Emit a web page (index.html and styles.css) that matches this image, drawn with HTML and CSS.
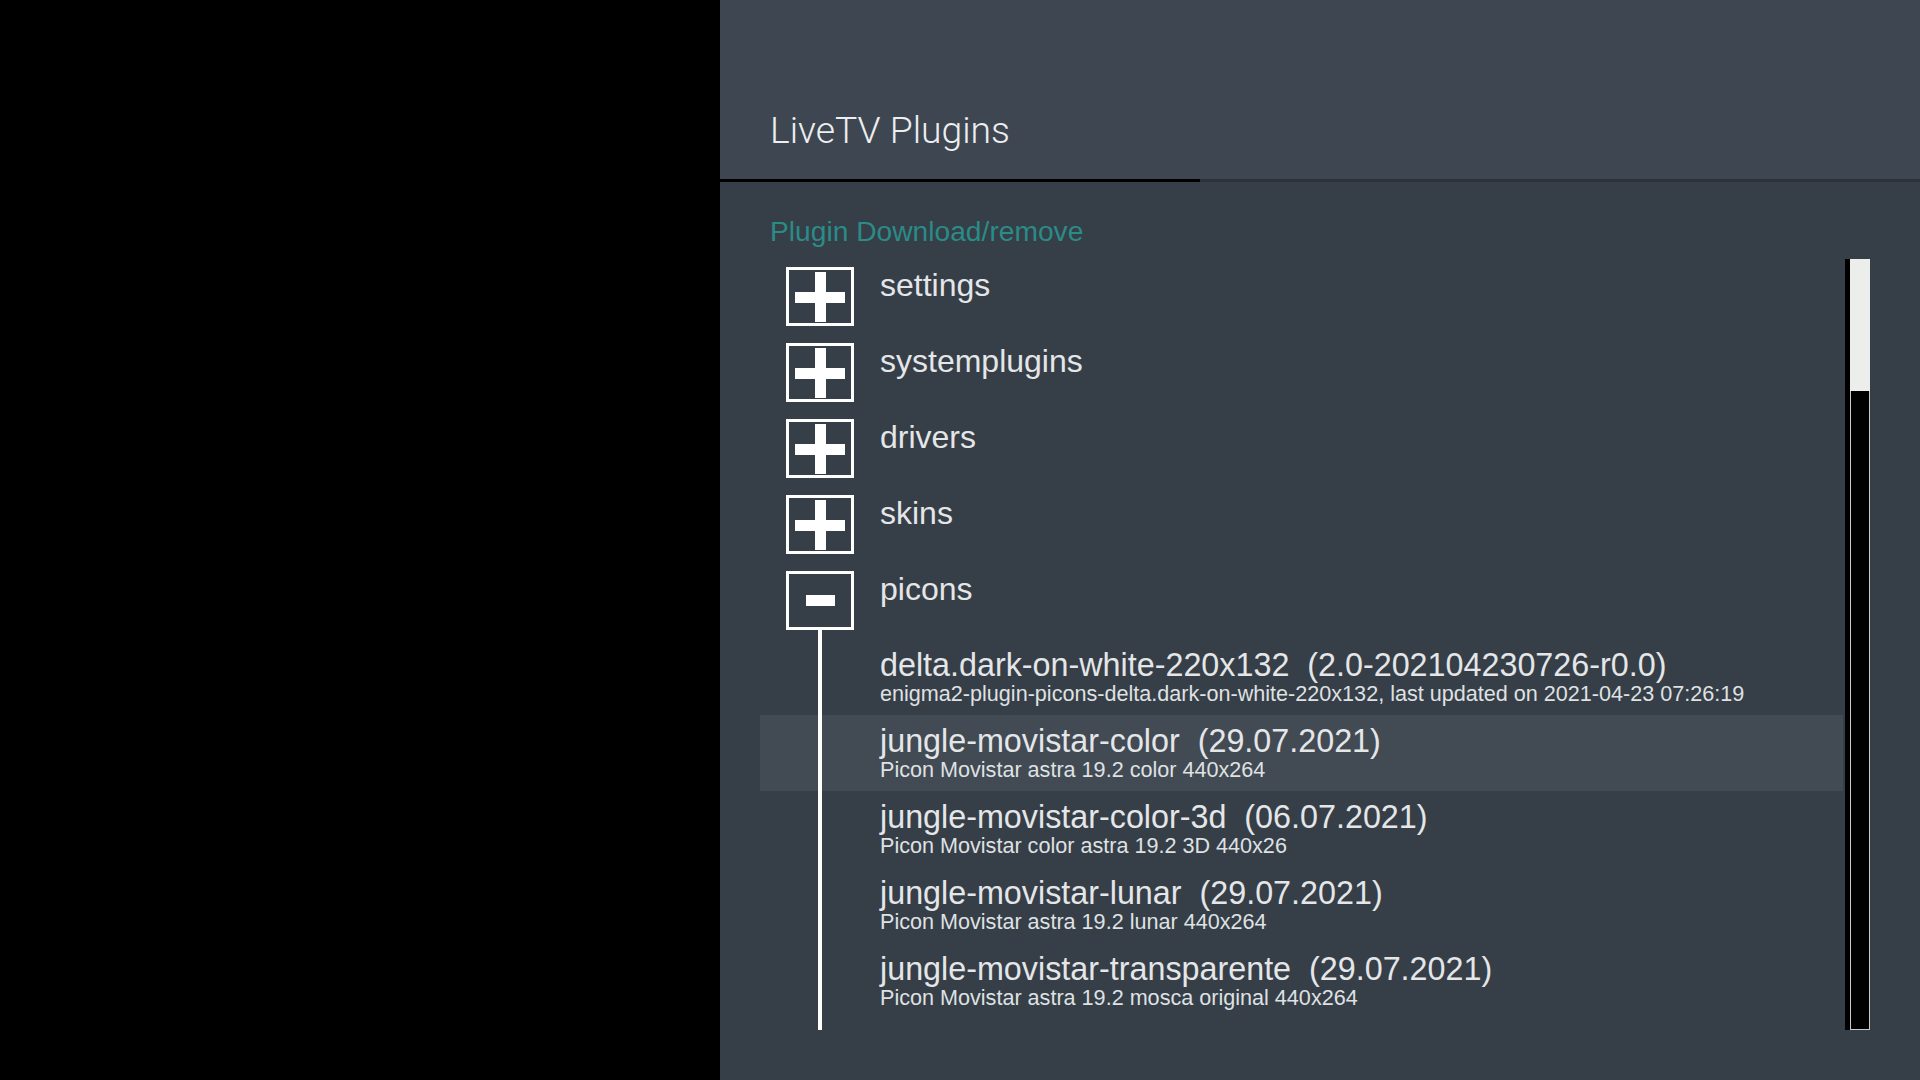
FILE: index.html
```html
<!DOCTYPE html>
<html lang="en">
<head>
    <meta charset="UTF-8">
    <title>LiveTV Plugins</title>
    <link rel="stylesheet" href="styles.css">
</head>
<body>
    <div class="screen">
        <div class="video"></div>

        <div class="panel">
            <div class="header">
                <h1>LiveTV Plugins</h1>
            </div>

            <div class="content">
                <div class="section">Plugin Download/remove</div>

                <div class="browser">
                    <div class="list">
                        <!-- categories -->
                        <div class="row">
                            <div class="node">
                                <div class="toggle">
                                    <svg width="50" height="50" viewBox="0 0 50 50"><rect x="0" y="20" width="50" height="11" fill="#fff"/><rect x="20" y="0" width="11" height="50" fill="#fff"/></svg>
                                </div>
                            </div>
                            <div class="label">settings</div>
                        </div>
                        <div class="row">
                            <div class="node">
                                <div class="toggle">
                                    <svg width="50" height="50" viewBox="0 0 50 50"><rect x="0" y="20" width="50" height="11" fill="#fff"/><rect x="20" y="0" width="11" height="50" fill="#fff"/></svg>
                                </div>
                            </div>
                            <div class="label">systemplugins</div>
                        </div>
                        <div class="row">
                            <div class="node">
                                <div class="toggle">
                                    <svg width="50" height="50" viewBox="0 0 50 50"><rect x="0" y="20" width="50" height="11" fill="#fff"/><rect x="20" y="0" width="11" height="50" fill="#fff"/></svg>
                                </div>
                            </div>
                            <div class="label">drivers</div>
                        </div>
                        <div class="row">
                            <div class="node">
                                <div class="toggle">
                                    <svg width="50" height="50" viewBox="0 0 50 50"><rect x="0" y="20" width="50" height="11" fill="#fff"/><rect x="20" y="0" width="11" height="50" fill="#fff"/></svg>
                                </div>
                            </div>
                            <div class="label">skins</div>
                        </div>
                        <div class="row">
                            <div class="node open">
                                <div class="toggle">
                                    <svg width="29" height="11" viewBox="0 0 29 11"><rect x="0" y="0" width="29" height="11" fill="#fff"/></svg>
                                </div>
                            </div>
                            <div class="label">picons</div>
                        </div>

                        <!-- picons packages -->
                        <div class="row child">
                            <div class="twig"></div>
                            <div class="label">
                                <div class="name">delta.dark-on-white-220x132&nbsp; (2.0-202104230726-r0.0)</div>
                                <div class="desc">enigma2-plugin-picons-delta.dark-on-white-220x132, last updated on 2021-04-23 07:26:19</div>
                            </div>
                        </div>
                        <div class="row child selected">
                            <div class="twig"></div>
                            <div class="label">
                                <div class="name">jungle-movistar-color&nbsp; (29.07.2021)</div>
                                <div class="desc">Picon Movistar astra 19.2 color 440x264</div>
                            </div>
                        </div>
                        <div class="row child">
                            <div class="twig"></div>
                            <div class="label">
                                <div class="name">jungle-movistar-color-3d&nbsp; (06.07.2021)</div>
                                <div class="desc">Picon Movistar color astra 19.2 3D 440x26</div>
                            </div>
                        </div>
                        <div class="row child">
                            <div class="twig"></div>
                            <div class="label">
                                <div class="name">jungle-movistar-lunar&nbsp; (29.07.2021)</div>
                                <div class="desc">Picon Movistar astra 19.2 lunar 440x264</div>
                            </div>
                        </div>
                        <div class="row child">
                            <div class="twig"></div>
                            <div class="label">
                                <div class="name">jungle-movistar-transparente&nbsp; (29.07.2021)</div>
                                <div class="desc">Picon Movistar astra 19.2 mosca original 440x264</div>
                            </div>
                        </div>
                        <div class="row child">
                            <div class="twig"></div>
                        </div>
                    </div>

                    <div class="scrollbar">
                        <div class="track">
                            <div class="thumb"></div>
                        </div>
                    </div>
                </div>
            </div>
        </div>
    </div>
</body>
</html>
```

FILE: styles.css
```css
body {
    margin: 0;
    background: #000;
    font-family: "Liberation Sans", Arial, sans-serif;
    color: #e4e6e8;
    overflow: hidden;
}
.screen {
    display: grid;
    grid-template-columns: 720px 1200px;
    height: 1080px;
}
.video {
    background: #000;
}
.panel {
    display: flex;
    flex-direction: column;
    background: #363e47;
}
.header {
    height: 179px;
    background: #3e4751;
    border-bottom: 3px solid #2c323a;
    position: relative;
    display: flex;
    align-items: flex-start;
}
/* left part of the header rule is drawn black */
.header::after {
    content: "";
    position: absolute;
    left: 0;
    bottom: -3px;
    width: 480px;
    height: 3px;
    background: #000;
}
h1 {
    margin: 0;
    padding: 109px 0 0 50px;
    font-family: Roboto, "Liberation Sans", sans-serif;
    font-weight: 300;
    font-size: 37.3px;
    line-height: 42px;
    color: #eceef0;
}
.content {
    flex: 1;
}
.section {
    padding: 33px 0 0 50px;
    font-size: 28.2px;
    line-height: 32px;
    color: #2a8b87;
}
.browser {
    display: flex;
    gap: 2px;
    margin: 12px 0 0 40px;
}
.list {
    width: 1083px;
    height: 771px;
    overflow: hidden;
}
.row {
    display: flex;
    gap: 26px;
    height: 76px;
    padding-left: 26px;
}
.row.selected {
    background: #424a54;
}
.node {
    width: 68px;
    display: flex;
    flex-direction: column;
    align-items: center;
}
.toggle {
    width: 68px;
    height: 59px;
    margin-top: 8px;
    box-sizing: border-box;
    border: 3px solid #fff;
    display: flex;
    align-items: center;
    justify-content: center;
}
/* an open node draws the start of its branch line */
.node.open::after {
    content: "";
    flex: 1;
    width: 4px;
    background: #fff;
}
.label {
    padding-top: 10px;
    font-size: 32px;
    line-height: 33px;
    white-space: nowrap;
}
.name {
    font-size: 32.3px;
}
.twig {
    width: 68px;
    display: flex;
    justify-content: center;
}
.twig::before {
    content: "";
    width: 4px;
    background: #fff;
}
.desc {
    font-size: 21.6px;
    line-height: 24px;
    color: #dfe1e3;
}
.scrollbar {
    width: 25px;
    height: 771px;
    background: #000;
    display: flex;
    justify-content: flex-end;
}
.track {
    width: 20px;
    border: 1px solid #c9cbc9;
    border-top: none;
    box-sizing: border-box;
}
.thumb {
    height: 132px;
    margin: 0 -1px;
    background: #eceeec;
}
```
